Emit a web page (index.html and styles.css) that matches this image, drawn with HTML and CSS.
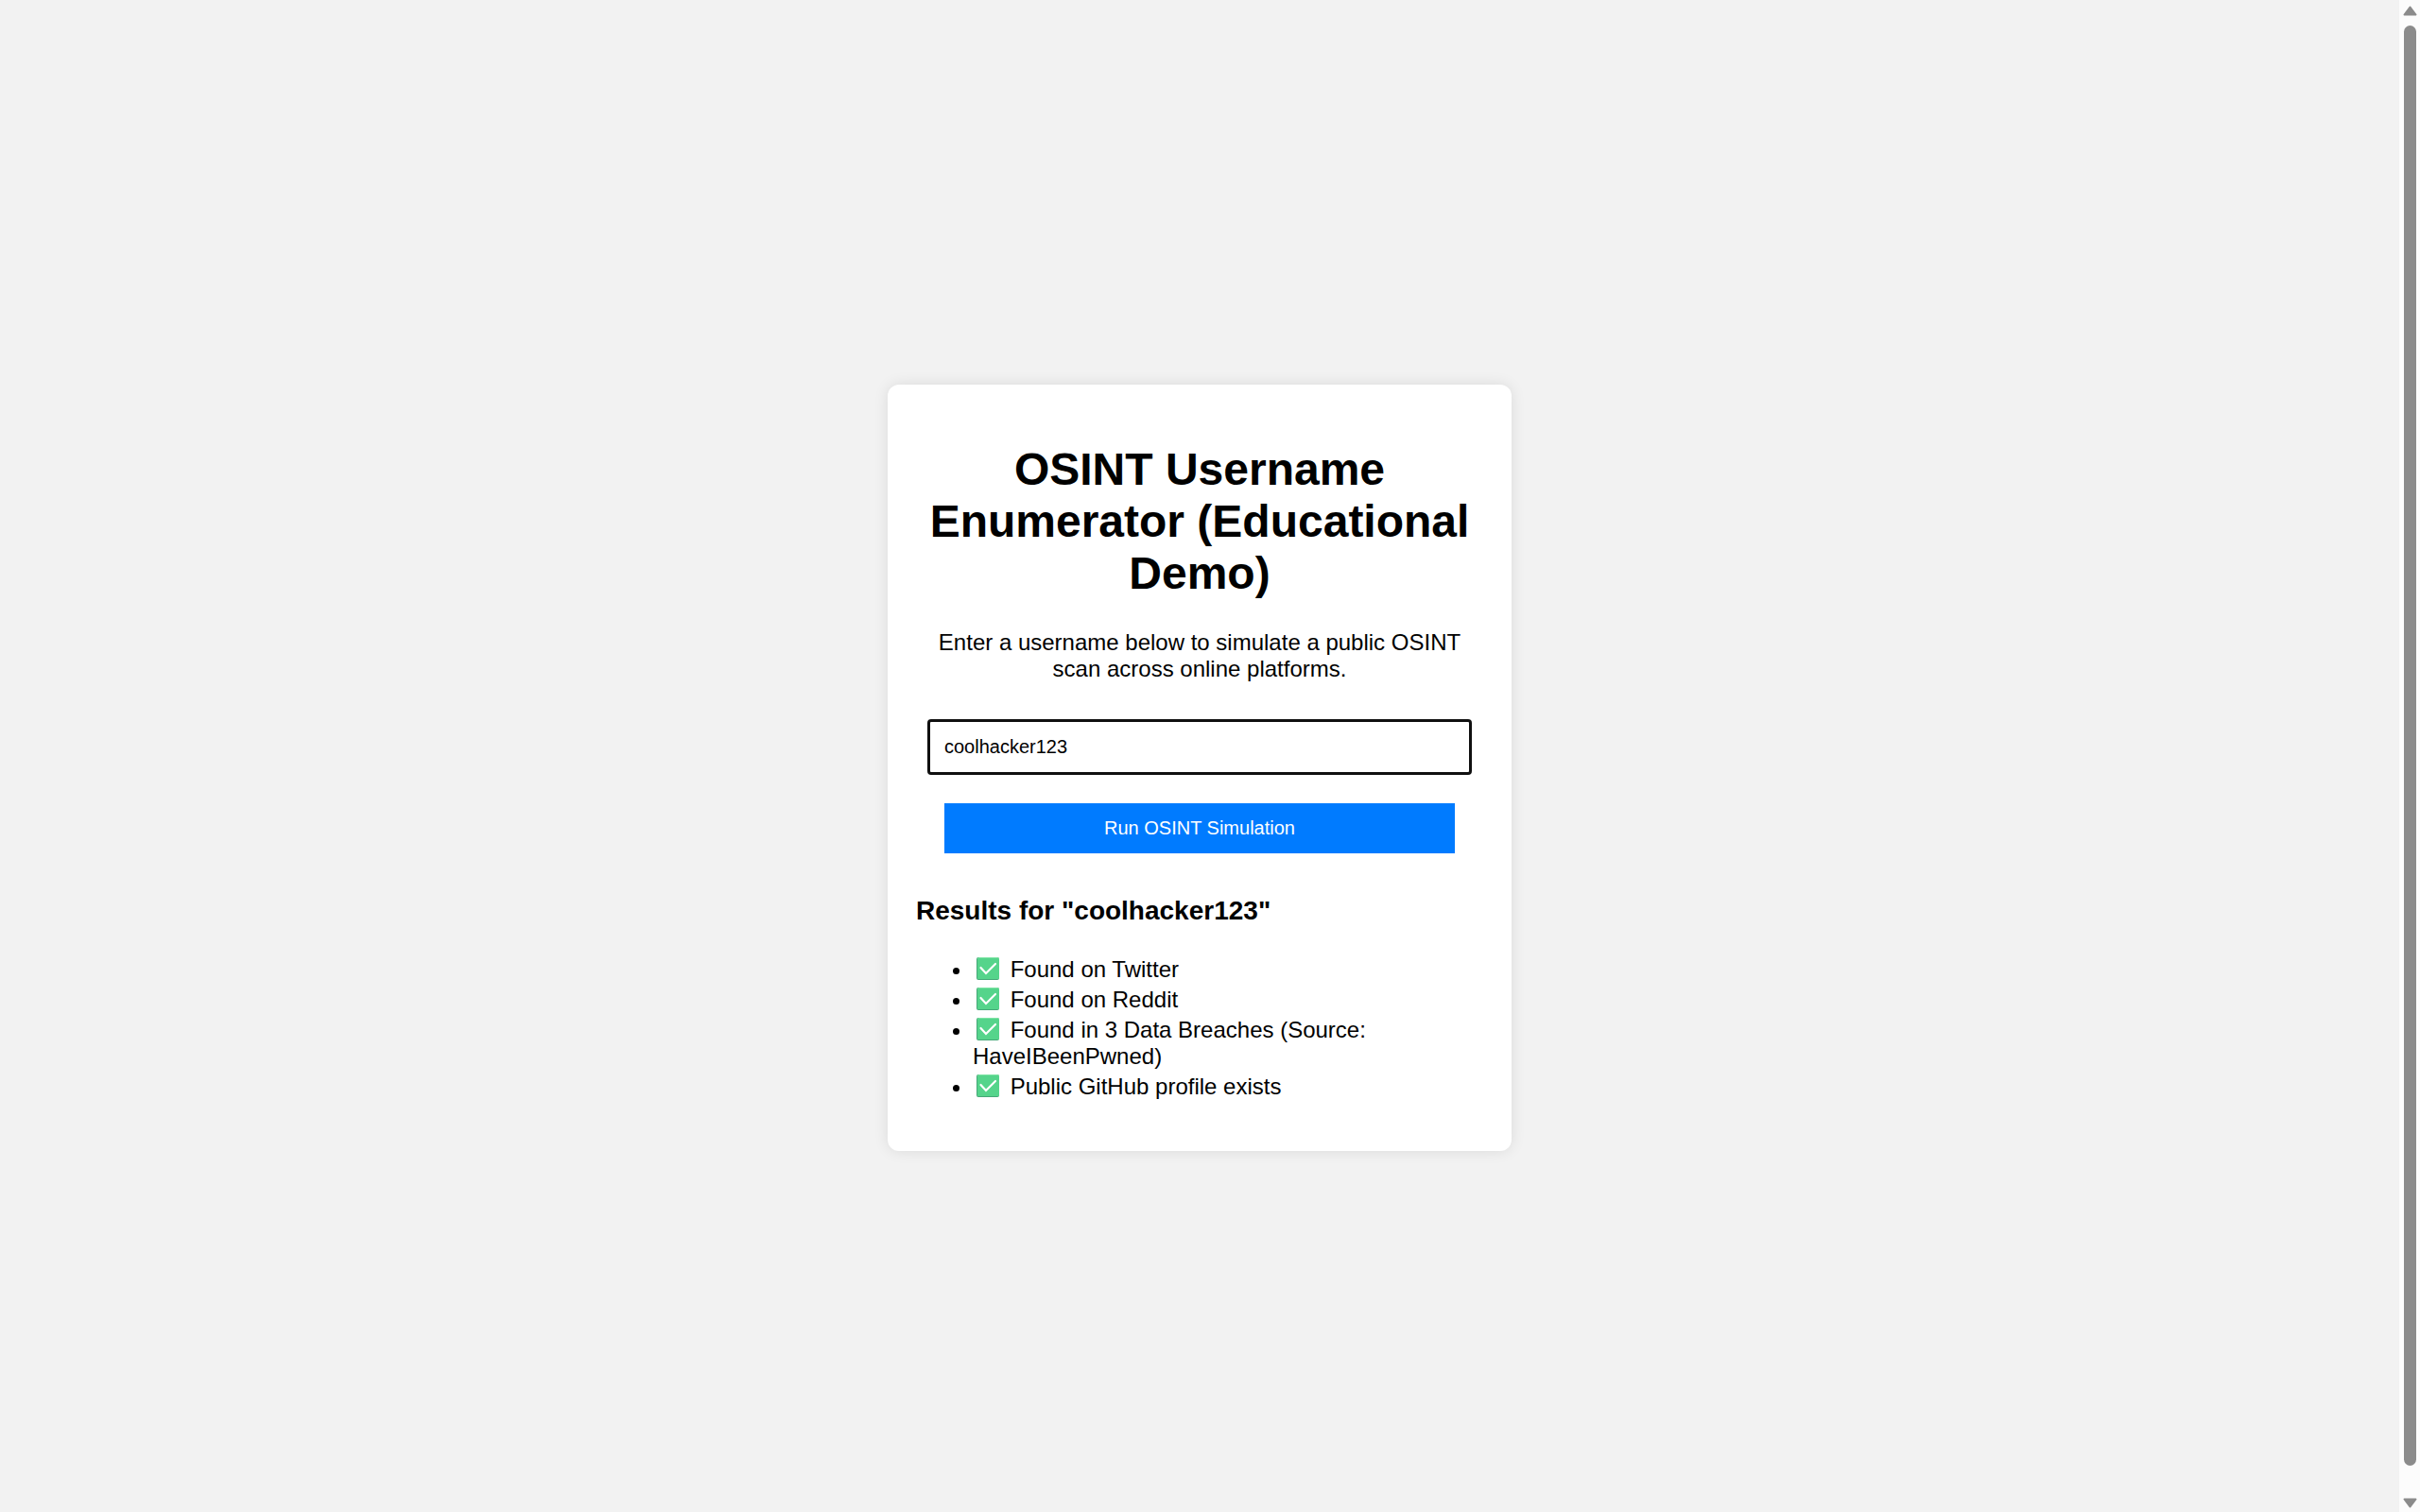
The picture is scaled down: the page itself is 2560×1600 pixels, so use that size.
FILE: index.html
```
<!DOCTYPE html>
<html lang="en">
<head>
    <meta charset="UTF-8">
    <meta name="viewport" content="width=device-width, initial-scale=1.0">
    <title>OSINT Username Enumerator</title>
    <link rel="stylesheet" href="styles.css">
</head>
<body>
    <!-- shared check icon -->
    <svg class="defs" aria-hidden="true">
        <symbol id="check" viewBox="0 0 24 24">
            <rect x="0" y="0" width="24" height="24" rx="2" fill="#45a877"/>
            <rect x="1" y="0" width="23" height="23" rx="2" fill="#7fe5a5"/>
            <rect x="1" y="1" width="23" height="22" rx="1.5" fill="#55d48b"/>
            <path d="M4.5 11l5.5 6L20 7" fill="none" stroke="#fff" stroke-width="2.2" stroke-linecap="round" stroke-linejoin="miter"/>
        </symbol>
    </svg>

    <main class="page">
        <div class="container">
            <h1>OSINT Username Enumerator (Educational Demo)</h1>
            <p>Enter a username below to simulate a public OSINT scan across online platforms.</p>
            <input type="text" id="username" aria-label="Username" value="coolhacker123">
            <button type="button" onclick="runScan()">Run OSINT Simulation</button>

            <div class="results" id="results">
                <h3>Results for "<span id="resultName">coolhacker123</span>"</h3>
                <ul>
                    <li><svg class="check"><use href="#check"/></svg> Found on Twitter</li>
                    <li><svg class="check"><use href="#check"/></svg> Found on Reddit</li>
                    <li><svg class="check"><use href="#check"/></svg> Found in 3 Data Breaches (Source: HaveIBeenPwned)</li>
                    <li><svg class="check"><use href="#check"/></svg> Public GitHub profile exists</li>
                </ul>
            </div>
        </div>
    </main>

    <div class="scrollbar" aria-hidden="true">
        <svg class="arrow" viewBox="0 0 15 11"><path d="M7.5 1.5L13.5 9.5H1.5z"/></svg>
        <div class="thumb"></div>
        <svg class="arrow" viewBox="0 0 15 11"><path d="M7.5 9.5L13.5 1.5H1.5z"/></svg>
    </div>

    <script>
        function runScan() {
            const name = document.getElementById('username').value.trim();
            if (name) {
                document.getElementById('resultName').textContent = name;
            }
        }
    </script>
</body>
</html>
```
FILE: styles.css
```
body {
    font-family: Arial, "Liberation Sans", sans-serif;
    font-size: 24px;
    line-height: 28px;
    color: #000;
    background-color: #f2f2f2;
    margin: 0;
    display: flex;
    height: 100vh;
}
.defs {
    position: absolute;
    width: 0;
    height: 0;
}
.page {
    flex: 1;
    display: flex;
    justify-content: center;
    align-items: center;
    padding-top: 24px;
}
.container {
    background-color: white;
    padding: 30px;
    border-radius: 12px;
    box-shadow: 0 0 15px rgba(0,0,0,0.1);
    width: 100%;
    max-width: 600px;
    text-align: center;
}
h1 {
    font-size: 48px;
    line-height: 55px;
    margin: 32px 0;
}
p {
    margin: 24px 0;
}
input,
button {
    font-family: inherit;
    font-size: 20px;
    line-height: 23px;
    width: 90%;
    padding: 15px;
    margin: 15px 0;
}
input {
    height: 23px;
    border: 3px solid #101010;
    border-radius: 4px;
    outline: none;
}
button {
    background-color: #007bff;
    color: white;
    border: none;
    cursor: pointer;
}
.results {
    margin-top: 30px;
    text-align: left;
}
h3 {
    font-size: 28px;
    line-height: 32px;
    margin: 28px 0;
}
ul {
    margin: 24px 0;
    padding-left: 60px;
}
.check {
    width: 24px;
    height: 24px;
    margin: 5px 5px 3px 4px;
    vertical-align: -6px;
}
.scrollbar {
    width: 22px;
    box-sizing: border-box;
    padding: 6px 0 4px;
    background-color: #fcfcfc;
    display: flex;
    flex-direction: column;
    align-items: center;
}
.thumb {
    flex: 1;
    width: 13px;
    margin: 10px 0 34px;
    border-radius: 7px;
    background-color: #8b8b8b;
}
.arrow {
    width: 15px;
    height: 11px;
    fill: #8b8b8b;
    stroke: #8b8b8b;
    stroke-width: 2;
    stroke-linejoin: round;
}
```
